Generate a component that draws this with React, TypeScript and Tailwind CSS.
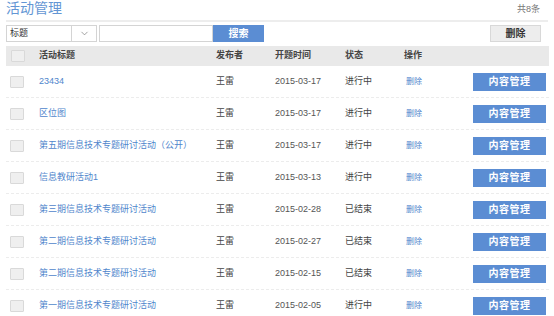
import { ChevronDown } from "lucide-react";

const rows = [
  { title: "23434", date: "2015-03-17", status: "进行中" },
  { title: "区位图", date: "2015-03-17", status: "进行中" },
  { title: "第五期信息技术专题研讨活动（公开）", date: "2015-03-17", status: "进行中" },
  { title: "信息教研活动1", date: "2015-03-13", status: "进行中" },
  { title: "第三期信息技术专题研讨活动", date: "2015-02-28", status: "已结束" },
  { title: "第二期信息技术专题研讨活动", date: "2015-02-27", status: "已结束" },
  { title: "第二期信息技术专题研讨活动", date: "2015-02-15", status: "已结束" },
  { title: "第一期信息技术专题研讨活动", date: "2015-02-05", status: "进行中" },
];

function Box() {
  return <div className="w-[14px] h-[12px] border border-[#d9d9d9] bg-[#efefef] rounded-[1px]" />;
}

export default function App() {
  return (
    <div
      className="w-[554px] h-[316px] overflow-hidden bg-white text-[#444] px-[6px]"
      style={{ fontFamily: '"Liberation Sans", "Noto Sans CJK SC", sans-serif' }}
    >
      <div className="flex items-end justify-between h-[22px] border-b-2 border-[#ededed] pr-[8px]">
        <div className="text-[14px] leading-[18px] text-[#6396d4] pb-[3px]">活动管理</div>
        <div className="text-[9px] text-[#777] pb-[4px]">共8条</div>
      </div>

      <div className="flex items-center h-[17px] mt-[3px]">
        <div className="flex w-[91px] h-[17px] border border-[#d4d4d4] bg-white">
          <div className="flex-1 text-[9px] leading-[15px] pl-[3px] text-[#333]">标题</div>
          <div className="w-[25px] border-l border-[#d4d4d4] flex items-center justify-center">
            <ChevronDown size={11} strokeWidth={1.5} className="text-[#777]" />
          </div>
        </div>
        <div className="ml-[2px] w-[114px] h-[17px] border border-[#d4d4d4] bg-white" />
        <div className="w-[51px] h-[17px] bg-[#5b8dd3] text-white text-[10px] font-semibold flex items-center justify-center">
          搜索
        </div>
        <div className="flex-1" />
        <div className="w-[51px] h-[17px] mr-[7px] bg-[#ededed] border border-[#d8d8d8] text-[10px] text-[#333] font-semibold flex items-center justify-center">
          删除
        </div>
      </div>

      <div className="mt-[4px] w-[543px] h-[20px] bg-[#e9e9e9] flex items-center text-[9px] font-semibold text-[#444]">
        <div className="w-[33px] pl-[5px]"><Box /></div>
        <div className="w-[177px]">活动标题</div>
        <div className="w-[59px]">发布者</div>
        <div className="w-[70px]">开题时间</div>
        <div className="w-[59px]">状态</div>
        <div className="w-[69px]">操作</div>
      </div>

      <div className="w-[543px]">
        {rows.map((r, i) => (
          <div
            key={i}
            className="flex items-center h-[32px] border-b border-dashed border-[#ececec] text-[9px]"
          >
            <div className="w-[33px] pl-[4px]"><Box /></div>
            <div className="w-[177px] text-[#4f86cc]">{r.title}</div>
            <div className="w-[59px] text-[#444]">王雷</div>
            <div className="w-[70px] text-[#555]">{r.date}</div>
            <div className="w-[59px] text-[#444]">{r.status}</div>
            <div className="w-[69px] pl-[2px] text-[#4f86cc] text-[8px]">删除</div>
            <div className="w-[73px] h-[18px] bg-[#5b8dd3] text-white text-[10px] font-semibold flex items-center justify-center tracking-[0.5px]">
              内容管理
            </div>
          </div>
        ))}
      </div>
    </div>
  );
}
